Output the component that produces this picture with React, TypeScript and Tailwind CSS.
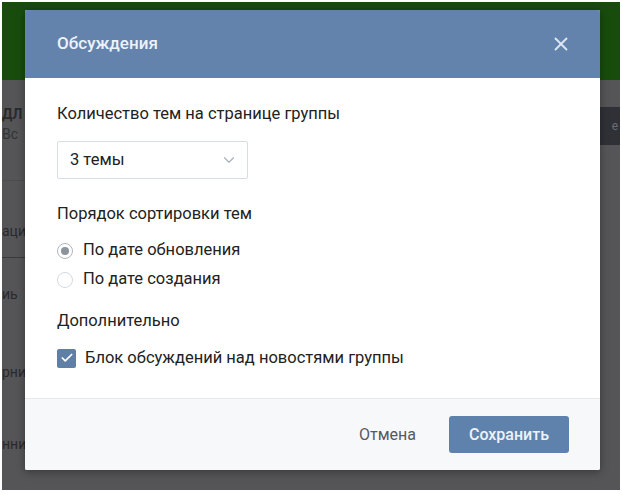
import { X, ChevronDown, Check } from "lucide-react";

const font = { fontFamily: "Roboto, 'Noto Sans', sans-serif" };

function Radio({ checked, label }: { checked?: boolean; label: string }) {
  return (
    <label className="flex h-[29px] items-center gap-[10px]">
      <span
        className={`flex h-[16px] w-[16px] items-center justify-center rounded-full border bg-white ${
          checked ? "border-[#aeb6c0]" : "border-[#d5dae0]"
        }`}
      >
        {checked && <span className="h-[8px] w-[8px] rounded-full bg-[#8b939c]" />}
      </span>
      <span className="text-[16.5px] text-[#222]">{label}</span>
    </label>
  );
}

function Background() {
  return (
    <div className="flex h-full w-full flex-col bg-white p-[2px] pb-[5px]">
      <div className="h-[78px] bg-[#184c0d]" />
      <div className="flex flex-1 bg-[#555558]">
        <div className="flex w-[25px] flex-col text-[14px] leading-[20px] text-[#2a2a2a]">
          <div className="mt-[24px] font-bold">ДЛ</div>
          <div className="text-[#333]">Вс</div>
          <div className="mt-[36px] h-px bg-[#4d4d50]" />
          <div className="mt-[40px]">аци</div>
          <div className="mt-[16px] h-px bg-[#3a3a3c]" />
          <div className="mt-[26px]">иь</div>
          <div className="mt-[58px]">рни</div>
          <div className="mt-[52px]">нни</div>
        </div>
        <div className="flex-1" />
        <div className="w-[20px]">
          <div className="mt-[27px] flex h-[38px] items-center justify-end bg-[#2f3136] pr-[2px] text-[12px] text-[#6b6e74]">
            е
          </div>
        </div>
      </div>
    </div>
  );
}

export default function App() {
  return (
    <div className="relative h-[495px] w-[622px] overflow-hidden" style={font}>
      <Background />
      <div className="absolute left-[25px] top-[10px] flex h-[460px] w-[575px] flex-col overflow-hidden rounded-[2px] bg-white shadow-[0_2px_8px_rgba(0,0,0,0.35)]">
        <div className="flex h-[68px] items-center justify-between bg-[#6383ad] pl-[32px] pr-[28px]">
          <span className="text-[17px] font-medium text-[#eef2f8]">Обсуждения</span>
          <X className="h-[22px] w-[22px] text-[#dfe7f1]" strokeWidth={2} />
        </div>

        <div className="flex flex-col px-[32px] pb-[30px] pt-[26px] text-[16.5px] text-[#222]">
          <div className="leading-[20px]">Количество тем на странице группы</div>
          <div className="mt-[17px] flex h-[38px] w-[191px] items-center justify-between rounded-[2px] border border-[#d8dde3] pl-[12px] pr-[9px]">
            <span className="text-[16.5px] text-[#222]">3 темы</span>
            <ChevronDown className="h-[18px] w-[18px] text-[#a6aeb8]" strokeWidth={1.5} />
          </div>

          <div className="mt-[25px] leading-[20px]">Порядок сортировки тем</div>
          <div className="mt-[12px] flex flex-col">
            <Radio checked label="По дате обновления" />
            <Radio label="По дате создания" />
          </div>

          <div className="mt-[17px] leading-[20px]">Дополнительно</div>
          <label className="mt-[17px] flex items-center gap-[9px]">
            <span className="flex h-[19px] w-[19px] items-center justify-center rounded-[2px] bg-[#5f7fa6]">
              <Check className="h-[14px] w-[14px] text-white" strokeWidth={3} />
            </span>
            <span className="leading-[20px]">Блок обсуждений над новостями группы</span>
          </label>
        </div>

        <div className="flex flex-1 items-center justify-end gap-[33px] border-t border-[#e7e8ec] bg-[#f7f8fa] pr-[31px]">
          <button className="text-[16px] text-[#55595f]">Отмена</button>
          <button className="h-[37px] w-[120px] rounded-[3px] bg-[#5f82ac] text-[16px] font-medium text-[#eef3f9]">
            Сохранить
          </button>
        </div>
      </div>
    </div>
  );
}
